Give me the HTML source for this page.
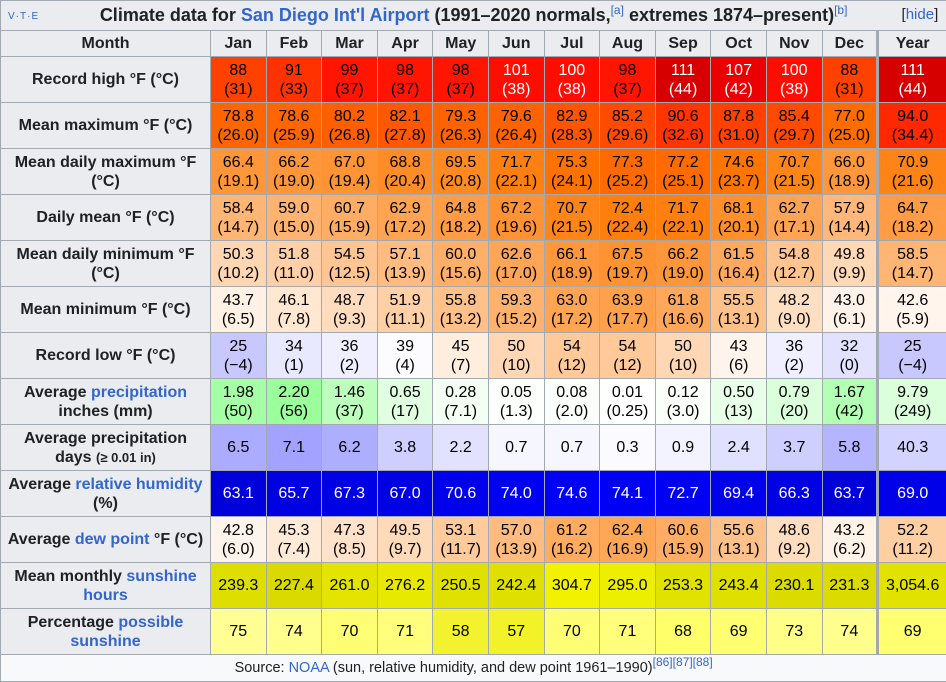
<!DOCTYPE html>
<html><head><meta charset="utf-8">
<style>
html,body{margin:0;padding:0;background:#f8f9fa;}
table{border-collapse:collapse;table-layout:fixed;width:946px;font-family:"Liberation Sans",Arial,sans-serif;font-size:16px;color:#202122;line-height:19px;}
td,th{border:1px solid #a2a9b1;padding:0 2px;text-align:center;overflow:hidden;}
th{background:#eaecf0;font-weight:bold;}
tr.r td,tr.r th{height:45px;}
td.y,th.y{border-left:3px solid #a2a9b1;}
a{color:#3366cc;text-decoration:none;}
.title{height:29px;font-size:18px;position:relative;}
.vte{position:absolute;left:7px;top:6px;font-size:10px;font-weight:normal;letter-spacing:1px;color:#3366cc;}
.hide{position:absolute;right:8px;top:4px;font-size:15px;font-weight:normal;}
sup{font-size:12px;line-height:0;font-weight:normal;}
.src{background:#f8f9fa;height:26px;font-size:14.5px;}
</style></head><body>
<table>
<colgroup><col style="width:210px"><col span="12" style="width:55.6px"><col style="width:69px"></colgroup>
<tr><th colspan="14" class="title"><span class="vte">V·T·E</span>Climate data for <a>San Diego Int'l Airport</a> (1991–2020 normals,<sup><a>[a]</a></sup> extremes 1874–present)<sup><a>[b]</a></sup><span class="hide">[<a>hide</a>]</span></th></tr>
<tr style="height:26px"><th>Month</th><th>Jan</th><th>Feb</th><th>Mar</th><th>Apr</th><th>May</th><th>Jun</th><th>Jul</th><th>Aug</th><th>Sep</th><th>Oct</th><th>Nov</th><th>Dec</th><th class="y">Year</th></tr>
<tr class="r t"><th>Record high °F (°C)</th><td>88<br>(31)</td><td>91<br>(33)</td><td>99<br>(37)</td><td>98<br>(37)</td><td>98<br>(37)</td><td>101<br>(38)</td><td>100<br>(38)</td><td>98<br>(37)</td><td>111<br>(44)</td><td>107<br>(42)</td><td>100<br>(38)</td><td>88<br>(31)</td><td class="y">111<br>(44)</td></tr>
<tr class="r t"><th>Mean maximum °F (°C)</th><td>78.8<br>(26.0)</td><td>78.6<br>(25.9)</td><td>80.2<br>(26.8)</td><td>82.1<br>(27.8)</td><td>79.3<br>(26.3)</td><td>79.6<br>(26.4)</td><td>82.9<br>(28.3)</td><td>85.2<br>(29.6)</td><td>90.6<br>(32.6)</td><td>87.8<br>(31.0)</td><td>85.4<br>(29.7)</td><td>77.0<br>(25.0)</td><td class="y">94.0<br>(34.4)</td></tr>
<tr class="r t"><th>Mean daily maximum °F (°C)</th><td>66.4<br>(19.1)</td><td>66.2<br>(19.0)</td><td>67.0<br>(19.4)</td><td>68.8<br>(20.4)</td><td>69.5<br>(20.8)</td><td>71.7<br>(22.1)</td><td>75.3<br>(24.1)</td><td>77.3<br>(25.2)</td><td>77.2<br>(25.1)</td><td>74.6<br>(23.7)</td><td>70.7<br>(21.5)</td><td>66.0<br>(18.9)</td><td class="y">70.9<br>(21.6)</td></tr>
<tr class="r t"><th>Daily mean °F (°C)</th><td>58.4<br>(14.7)</td><td>59.0<br>(15.0)</td><td>60.7<br>(15.9)</td><td>62.9<br>(17.2)</td><td>64.8<br>(18.2)</td><td>67.2<br>(19.6)</td><td>70.7<br>(21.5)</td><td>72.4<br>(22.4)</td><td>71.7<br>(22.1)</td><td>68.1<br>(20.1)</td><td>62.7<br>(17.1)</td><td>57.9<br>(14.4)</td><td class="y">64.7<br>(18.2)</td></tr>
<tr class="r t"><th>Mean daily minimum °F (°C)</th><td>50.3<br>(10.2)</td><td>51.8<br>(11.0)</td><td>54.5<br>(12.5)</td><td>57.1<br>(13.9)</td><td>60.0<br>(15.6)</td><td>62.6<br>(17.0)</td><td>66.1<br>(18.9)</td><td>67.5<br>(19.7)</td><td>66.2<br>(19.0)</td><td>61.5<br>(16.4)</td><td>54.8<br>(12.7)</td><td>49.8<br>(9.9)</td><td class="y">58.5<br>(14.7)</td></tr>
<tr class="r t"><th>Mean minimum °F (°C)</th><td>43.7<br>(6.5)</td><td>46.1<br>(7.8)</td><td>48.7<br>(9.3)</td><td>51.9<br>(11.1)</td><td>55.8<br>(13.2)</td><td>59.3<br>(15.2)</td><td>63.0<br>(17.2)</td><td>63.9<br>(17.7)</td><td>61.8<br>(16.6)</td><td>55.5<br>(13.1)</td><td>48.2<br>(9.0)</td><td>43.0<br>(6.1)</td><td class="y">42.6<br>(5.9)</td></tr>
<tr class="r t"><th>Record low °F (°C)</th><td>25<br>(−4)</td><td>34<br>(1)</td><td>36<br>(2)</td><td>39<br>(4)</td><td>45<br>(7)</td><td>50<br>(10)</td><td>54<br>(12)</td><td>54<br>(12)</td><td>50<br>(10)</td><td>43<br>(6)</td><td>36<br>(2)</td><td>32<br>(0)</td><td class="y">25<br>(−4)</td></tr>
<tr class="r p"><th>Average <a>precipitation</a><br>inches (mm)</th><td>1.98<br>(50)</td><td>2.20<br>(56)</td><td>1.46<br>(37)</td><td>0.65<br>(17)</td><td>0.28<br>(7.1)</td><td>0.05<br>(1.3)</td><td>0.08<br>(2.0)</td><td>0.01<br>(0.25)</td><td>0.12<br>(3.0)</td><td>0.50<br>(13)</td><td>0.79<br>(20)</td><td>1.67<br>(42)</td><td class="y">9.79<br>(249)</td></tr>
<tr class="r d"><th>Average precipitation<br>days <span style="font-size:13px">(≥ 0.01 in)</span></th><td>6.5</td><td>7.1</td><td>6.2</td><td>3.8</td><td>2.2</td><td>0.7</td><td>0.7</td><td>0.3</td><td>0.9</td><td>2.4</td><td>3.7</td><td>5.8</td><td class="y">40.3</td></tr>
<tr class="r h"><th>Average <a>relative humidity</a><br>(%)</th><td>63.1</td><td>65.7</td><td>67.3</td><td>67.0</td><td>70.6</td><td>74.0</td><td>74.6</td><td>74.1</td><td>72.7</td><td>69.4</td><td>66.3</td><td>63.7</td><td class="y">69.0</td></tr>
<tr class="r t"><th style="white-space:nowrap">Average <a>dew point</a> °F (°C)</th><td>42.8<br>(6.0)</td><td>45.3<br>(7.4)</td><td>47.3<br>(8.5)</td><td>49.5<br>(9.7)</td><td>53.1<br>(11.7)</td><td>57.0<br>(13.9)</td><td>61.2<br>(16.2)</td><td>62.4<br>(16.9)</td><td>60.6<br>(15.9)</td><td>55.6<br>(13.1)</td><td>48.6<br>(9.2)</td><td>43.2<br>(6.2)</td><td class="y">52.2<br>(11.2)</td></tr>
<tr class="r s"><th>Mean monthly <a>sunshine<br>hours</a></th><td>239.3</td><td>227.4</td><td>261.0</td><td>276.2</td><td>250.5</td><td>242.4</td><td>304.7</td><td>295.0</td><td>253.3</td><td>243.4</td><td>230.1</td><td>231.3</td><td class="y">3,054.6</td></tr>
<tr class="r q"><th>Percentage <a>possible<br>sunshine</a></th><td>75</td><td>74</td><td>70</td><td>71</td><td>58</td><td>57</td><td>70</td><td>71</td><td>68</td><td>69</td><td>73</td><td>74</td><td class="y">69</td></tr>
<tr><td colspan="14" class="src">Source: <a>NOAA</a> (sun, relative humidity, and dew point 1961–1990)<sup><a>[86]</a><a>[87]</a><a>[88]</a></sup></td></tr>
</table>
<script>
function cl(v){return Math.max(0,Math.min(255,Math.round(v)));}
function tc(t){var r=255,g,b;
 if(t<4.5){var v=255-(4.5-t)*6.5;return [cl(v),cl(v),255];}
 if(t<23.3){g=255-(t-4.5)*7.2;b=255-(t-4.5)*13.56;return [255,cl(g),cl(b)];}
 g=120-(t-23.3)*7.2; if(t>40)r=255-(t-40)*10; return [cl(r),cl(g),0];}
document.querySelectorAll('tr.r').forEach(function(tr){
 var k=tr.className.split(' ')[1];
 tr.querySelectorAll('td').forEach(function(td){
  var s=td.textContent.replace('−','-').replace(/,/g,''),m=s.match(/\(([-\d.]+)\)/),v=parseFloat(m?m[1]:s),yr=td.classList.contains('y'),c,w=false;
  if(k=='t'){c=tc(v);w=v>=38;}
  else if(k=='p'){if(yr)v/=12;var x=255-v*1.8;c=[cl(x),255,cl(x)];}
  else if(k=='d'){if(yr)v/=12;var x=255-v*13;c=[cl(x),cl(x),255];}
  else if(k=='h'){c=[0,0,cl(2.5*v+60)];w=true;}
  else if(k=='s'){if(yr)v/=12;var x=0.295*v+151;c=[cl(x),cl(x),0];}
  else {var b=40+(v-57)*6;var x=v<60?242:255;c=[x,x,cl(b)];}
  td.style.background='rgb('+c.join(',')+')';
  td.style.color=w?'#fff':'#000';
 });
});
</script>
</body></html>
